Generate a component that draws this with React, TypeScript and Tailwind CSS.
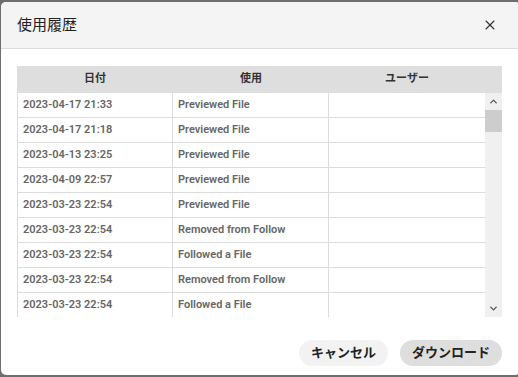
import { X, ChevronUp, ChevronDown } from "lucide-react";

const rows = [
  { date: "2023-04-17 21:33", action: "Previewed File", user: "" },
  { date: "2023-04-17 21:18", action: "Previewed File", user: "" },
  { date: "2023-04-13 23:25", action: "Previewed File", user: "" },
  { date: "2023-04-09 22:57", action: "Previewed File", user: "" },
  { date: "2023-03-23 22:54", action: "Previewed File", user: "" },
  { date: "2023-03-23 22:54", action: "Removed from Follow", user: "" },
  { date: "2023-03-23 22:54", action: "Followed a File", user: "" },
  { date: "2023-03-23 22:54", action: "Removed from Follow", user: "" },
  { date: "2023-03-23 22:54", action: "Followed a File", user: "" },
];

const font = { fontFamily: "Roboto, 'Noto Sans CJK JP', sans-serif" };

export default function App() {
  return (
    <div className="w-[518px] h-[377px] bg-[#6e6e6e] pt-[2px] pl-[1px] pb-[2px] overflow-hidden" style={font}>
      <div className="h-full w-[519px] bg-white rounded-[5px] overflow-hidden flex flex-col">
        {/* Header */}
        <div className="h-[47px] shrink-0 bg-[#f4f4f4] border-b border-[#dcdcdc] flex items-center justify-between pl-[16px] pr-[22px]">
          <h2 className="text-[15px] text-[#222] font-normal pt-[1px]">使用履歴</h2>
          <X className="w-[16px] h-[16px] text-[#333]" strokeWidth={1.6} />
        </div>

        {/* Table */}
        <div className="pt-[17px] px-[16px]">
          <div className="w-[485px]">
            <div className="h-[27px] bg-[#dedede] flex text-[11px] font-bold text-[#333]">
              <div className="w-[156px] flex items-center justify-center">日付</div>
              <div className="w-[156px] flex items-center justify-center">使用</div>
              <div className="w-[156px] flex items-center justify-center">ユーザー</div>
            </div>
            <div className="flex h-[224px]">
              <div className="w-[468px] overflow-hidden border-l border-[#dcdcdc]">
                {rows.map((r, i) => (
                  <div key={i} className="h-[25px] flex border-b border-[#dcdcdc] text-[11px] font-semibold text-[#666]">
                    <div className="w-[155px] shrink-0 border-r border-[#dcdcdc] flex items-center pl-[5px]">{r.date}</div>
                    <div className="w-[156px] shrink-0 border-r border-[#dcdcdc] flex items-center pl-[5px]">{r.action}</div>
                    <div className="flex-1 flex items-center pl-[5px]">{r.user}</div>
                  </div>
                ))}
              </div>
              <div className="w-[17px] bg-[#f0f0f0] flex flex-col">
                <div className="h-[17px] flex items-center justify-center">
                  <ChevronUp className="w-[11px] h-[11px] text-[#555]" strokeWidth={3} />
                </div>
                <div className="h-[22px] bg-[#cdcdcd]" />
                <div className="flex-1" />
                <div className="h-[17px] flex items-center justify-center">
                  <ChevronDown className="w-[11px] h-[11px] text-[#555]" strokeWidth={3} />
                </div>
              </div>
            </div>
          </div>
        </div>

        {/* Footer */}
        <div className="flex justify-end gap-[12px] pr-[18px] pt-[23px]">
          <button className="h-[26px] px-[12px] rounded-full bg-[#f2f2f2] text-[13px] font-bold text-[#222]">キャンセル</button>
          <button className="h-[26px] px-[12px] rounded-full bg-[#dedede] text-[13px] font-bold text-[#222]">ダウンロード</button>
        </div>
      </div>
    </div>
  );
}
